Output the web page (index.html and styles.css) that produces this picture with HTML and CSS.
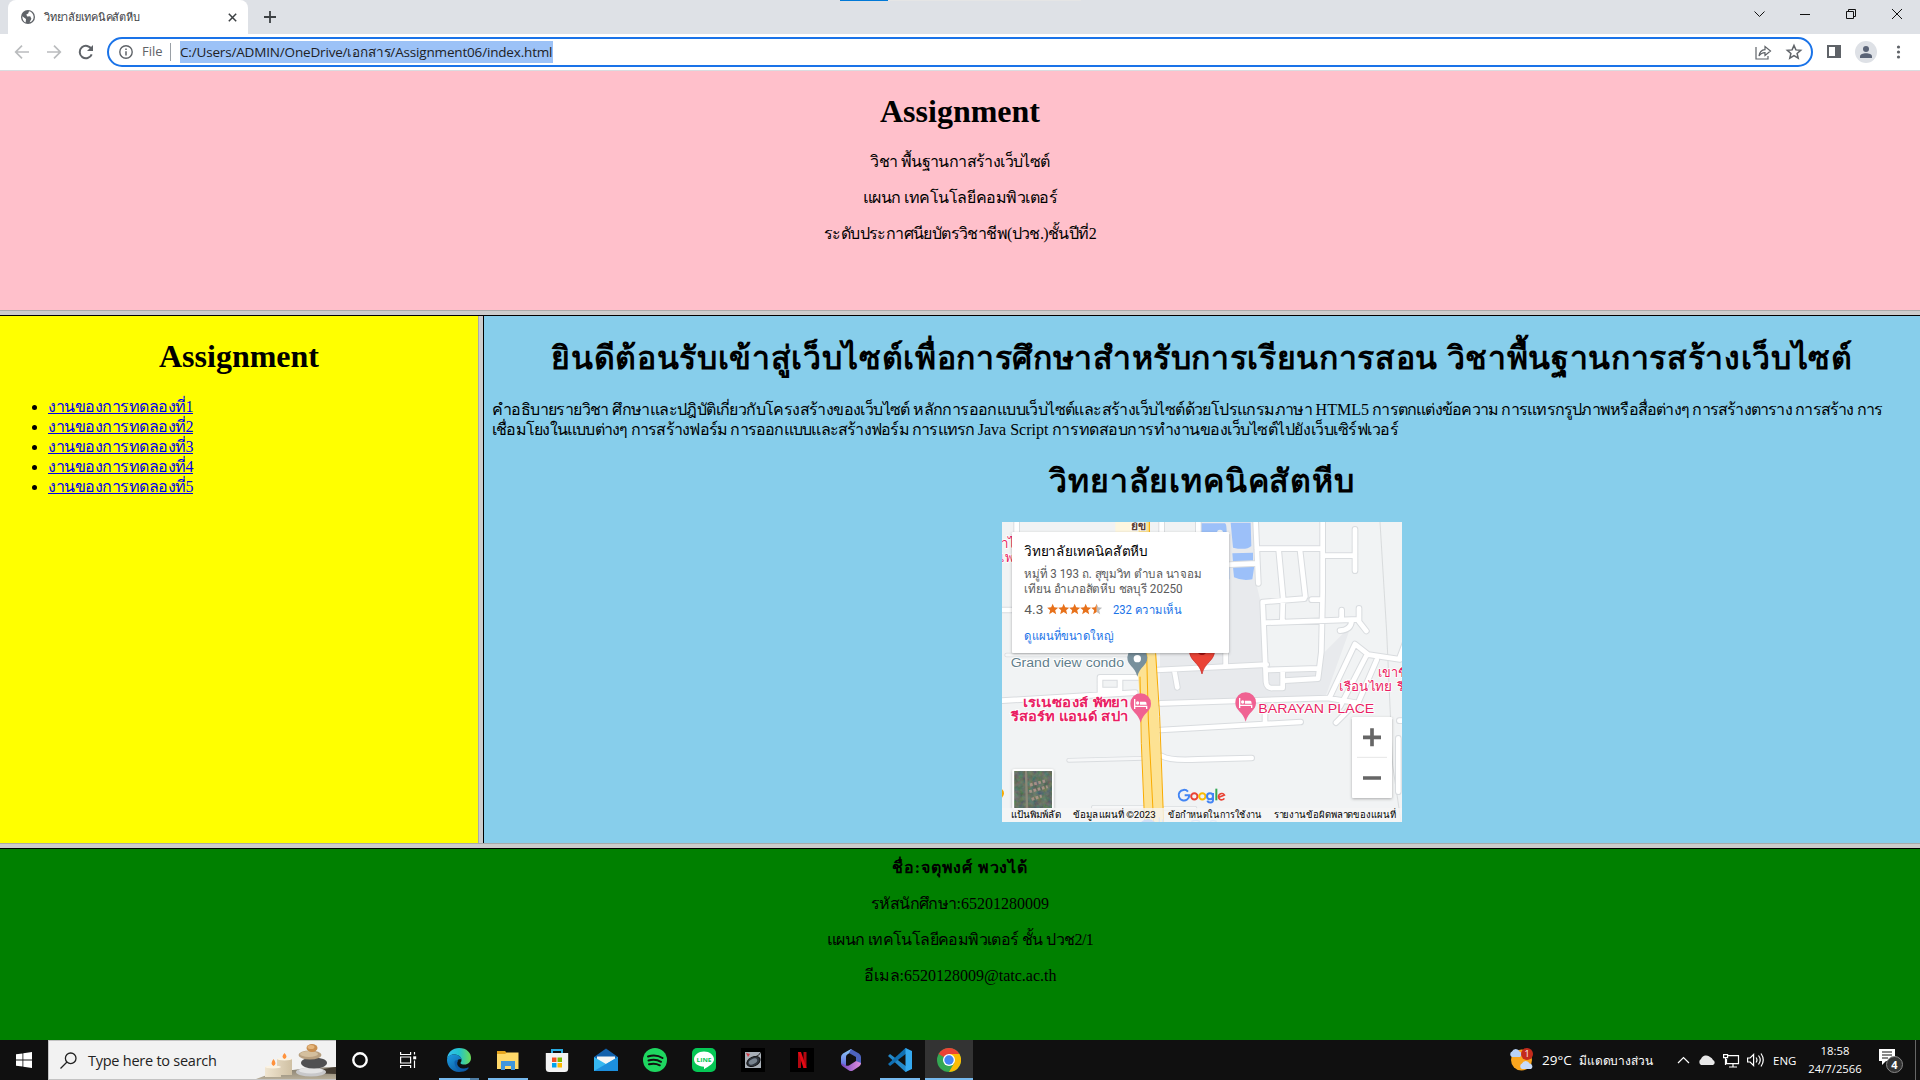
FILE: index.html
```
<!DOCTYPE html>
<html lang="th">
<head>
<meta charset="utf-8">
<title>วิทยาลัยเทคนิคสัตหีบ</title>
<link rel="stylesheet" href="styles.css">
</head>
<body>
<div class="screen">
  <header class="tabstrip">
    <div class="tab">
      <svg class="globe" width="14" height="14" viewBox="0 0 14 14"><circle cx="7" cy="7" r="7" fill="#5f6368"/><path d="M1.3 6.3 5 9l-.3 3.6C2.600 11.700 1.300 9.500 1.300 6.300M8 1.300 7.200 3.500 5.300 4.600l.9 2 3-.3 1.200 2.500-1.800 3.500c3-.8 4.300-3 4-6-.4-2.700-2.100-4.500-4.600-5" fill="#fff"/></svg>
      <span class="tab-title">วิทยาลัยเทคนิคสัตหีบ</span>
      <svg class="tab-close" width="9" height="9" viewBox="0 0 9 9"><path d="m.8.8 7.400 7.400m0-7.400L.8 8.200" stroke="#3c4043" stroke-width="1.500"/></svg>
    </div>
    <svg class="plus" width="12" height="12" viewBox="0 0 12 12"><path d="M6 0v12M0 6h12" stroke="#3c4043" stroke-width="1.800"/></svg>
    <i class="progress"></i>
    <svg class="winbtns" width="160" height="34" viewBox="0 0 160 34" fill="none" stroke="#111"><path d="m4.500 11.500 5 5 5-5"/><path d="M50 14.500h10"/><path d="M96.500 11.500h7v7h-7zM98.500 11V9.500h7v7H104"/><path d="m142 9 10 10m0-10-10 10"/></svg>
  </header>
  <div class="toolbar">
    <svg width="104" height="36" viewBox="0 0 104 36" fill="none" stroke-width="1.700"><g stroke="#babcbe"><path d="M29 18H16m6-6.300L15.700 18l6.300 6.300M47 18h13m-6-6.300 6.300 6.300-6.300 6.300"/></g><path d="M91.500 15.300a6.200 6.200 0 1 0 .2 5" stroke="#5f6368" stroke-width="2"/><path d="M93 11v6h-6z" fill="#5f6368"/></svg>
    <div class="omnibox">
      <svg class="info" width="14" height="14" viewBox="0 0 14 14"><circle cx="7" cy="7" r="6.200" fill="none" stroke="#5f6368" stroke-width="1.400"/><path d="M7 6.200v4.200M7 3.500V5" stroke="#5f6368" stroke-width="1.500"/></svg>
      <span class="scheme">File</span>
      <span class="url">C:/Users/ADMIN/OneDrive/เอกสาร/Assignment06/index.html</span>
      <svg class="omni-actions" width="50" height="18" viewBox="0 0 50 18" fill="none" stroke="#5f6368" stroke-width="1.200"><path d="M1 4v12h12v-3M4 13c.5-4 2.500-6 6-6.300V3.500L15.500 8 10 12.500V9.600c-2.500 0-4.500 1-6 3.400z"/><path d="m39 2.500 1.900 4.400 4.800.4-3.600 3.200 1.100 4.700L39 12.700l-4.200 2.500 1.100-4.700-3.600-3.200 4.800-.4z" stroke-width="1.500"/></svg>
    </div>
    <svg class="tool-actions" width="96" height="24" viewBox="0 0 96 24"><path d="M4 6h12v11H4z" fill="none" stroke="#5f6368" stroke-width="2"/><path d="M11 5h6v13h-6z" fill="#5f6368"/><circle cx="42" cy="12" r="11" fill="#dee1e6"/><circle cx="42" cy="9" r="3" fill="#5a6376"/><path d="M36 18v-1.500c0-4.200 12-4.200 12 0V18z" fill="#5a6376"/><g fill="#5f6368"><circle cx="74.500" cy="7" r="1.600"/><circle cx="74.500" cy="12" r="1.600"/><circle cx="74.500" cy="17" r="1.600"/></g></svg>
  </div>

  <main class="frames">
    <section class="frame top">
      <h1>Assignment</h1>
      <p class="tight">วิชา พื้นฐานกาสร้างเว็บไซต์</p>
      <p class="snug">แผนก เทคโนโลยีคอมพิวเตอร์</p>
      <p class="tight">ระดับประกาศนียบัตรวิชาชีพ(ปวช.)ชั้นปีที่2</p>
    </section>
    <div class="split-h"></div>
    <div class="middle">
      <nav class="frame menu">
        <h1>Assignment</h1>
        <ul>
          <li><a href="#1">งานของการทดลองที่1</a></li>
          <li><a href="#2">งานของการทดลองที่2</a></li>
          <li><a href="#3">งานของการทดลองที่3</a></li>
          <li><a href="#4">งานของการทดลองที่4</a></li>
          <li><a href="#5">งานของการทดลองที่5</a></li>
        </ul>
      </nav>
      <div class="split-v"></div>
      <section class="frame content">
        <h1 class="welcome">ยินดีต้อนรับเข้าสู่เว็บไซต์เพื่อการศึกษาสำหรับการเรียนการสอน วิชาพื้นฐานการสร้างเว็บไซต์</h1>
        <p class="desc"><span class="tight">คำอธิบายรายวิชา ศึกษาและปฎิบัติเกี่ยวกับโครงสร้างของเว็บไซต์ หลักการออกแบบเว็บไซต์และสร้างเว็บไซต์ด้วยโปรแกรมภาษา </span>HTML5<span class="tighter"> การตกแต่งข้อความ การแทรกรูปภาพหรือสื่อต่างๆ การสร้างตาราง การสร้าง การ</span><br><span class="tighter">เชื่อมโยงในแบบต่างๆ การสร้างฟอร์ม การออกแบบและสร้างฟอร์ม การแทรก </span>Java Script<span class="snug"> การทดสอบการทำงานของเว็บไซต์ไปยังเว็บเซิร์ฟเวอร์</span></p>
        <h1 class="college">วิทยาลัยเทคนิคสัตหีบ</h1>
        <div class="map">
          <svg width="400" height="300" viewBox="36 36 1200 900">
            <defs>
              <filter id="sh" x="-10%" y="-10%" width="120%" height="125%"><feDropShadow dx="0" dy="3" stdDeviation="4" flood-opacity=".3"/></filter>
              <filter id="aerial" x="0" y="0" width="1" height="1"><feTurbulence type="fractalNoise" baseFrequency=".07" numOctaves="3" seed="8"/><feColorMatrix values=".5 0 0 0 0  0 .5 0 0 .05  0 0 .4 0 .03  0 0 0 0 1"/></filter>
            </defs>
            <path fill="#f1f3f4" d="M36 36h1200v900H36z"/>
            <path fill="#e8eaed" d="M510 36h290v190l12 50 12 190 160 20 20-60 80-80-80 220-494 25z"/>
            <path fill="#f1f3f4" d="M520 36h100v30H520z"/>
            <path fill="#fef7e0" d="M376 36h95v30h-95z"/>
            <path fill="#9cc0f9" d="M630 40h75q5 0 5 30h-82zM722 38h60l2 70q-15 14-55 5zM727 130l62-2v25l-60 4zM729 172l64-4-6 40q-30 6-55-6zM700 170h18v38h-18z"/>
            <circle cx="690" cy="68" r="9" fill="#f1f3f4"/>
            <path d="M1170 36l20 330 18 400 25 170" fill="none" stroke="#ccced0" stroke-width="2"/>
            <g fill="none" stroke-linecap="round" stroke-linejoin="round">
              <g stroke="#d9dcdf" stroke-width="20">
                <path id="r" d="M80 36v40M515 36v40M625 36v40M797 36l8 184M720 164l80-4M800 116h195M998 36v210l-4 180-10 80-100 6M1005 137h90M1095 58v124M866 120l13 140-2 70M930 120l16 140M818 276l125-10M965 269h30M818 276l10 240q2 20 20 18h30v-55M830 480l155-5M1055 300v30M1107 295v40l22 28M830 338l275-10M1085 332q-2 28-35 30M36 300h28M500 480l330-16M707 430v34M553 482l9 50M36 572l400-24M330 550v-48h120M335 540h55v-30M512 580l500-16 86 14-60 60M512 660l420-24M825 590v44M515 738q25 15 110 10l160-4M1020 560l75-158 40 32 95 14M1230 440l30-80M1050 590l80-155M1095 600l65-150M1225 685v160M1236 632h-8"/>
              </g>
              <use href="#r" stroke="#fff" stroke-width="14"/>
              <path d="M236 751l225-6M50 435h370M310 892h150M515 895h100" stroke="#d9dcdf" stroke-width="14"/><path d="M236 751l225-6M50 435h370M310 892h150M515 895h100" stroke="#f6f7f8" stroke-width="9"/>
            </g>
            <path d="M440 430h58l8 190 16 320h-58l-12-330zM446 36h34v40h-34z" fill="#fde293"/>
            <path d="M478 36v40M450 500l4 200 10 240M470 430l5 200 16 310M497 430l12 190 12 320" fill="none" stroke="#f9ab00" stroke-width="3"/>
            <g class="poi">
              <text x="62" y="472" font-size="36" fill="#607d8b" textLength="340" lengthAdjust="spacingAndGlyphs">Grand view condo</text>
              <g fill="#e91e63">
                <text x="100" y="591" font-size="38" textLength="314" lengthAdjust="spacingAndGlyphs" class="b">เรเนซองส์ พัทยา</text>
                <text x="62" y="633" font-size="38" textLength="352" lengthAdjust="spacingAndGlyphs" class="b">รีสอร์ท แอนด์ สปา</text>
                <text x="805" y="608" font-size="37" textLength="348" lengthAdjust="spacingAndGlyphs">BARAYAN PLACE</text>
                <text x="1165" y="501" font-size="38">เขาชี</text>
                <text x="1048" y="542" font-size="38" textLength="156" lengthAdjust="spacingAndGlyphs">เรือนไทย</text>
                <text x="1222" y="542" font-size="38">รี</text>
                <text x="32" y="114" font-size="40">าไ</text><text x="30" y="157" font-size="40">เพ</text>
              </g>
              <text x="422" y="61" font-size="36" fill="#5d4037" class="b">ย์ข</text>
            </g>
            <path d="M508 922v14m10-8v8M604 934q14-6 26 0M660 934q8-4 20 0" stroke="#8db6f5" stroke-width="4" fill="none"/>
            <path d="M442 500c-8-32-30-32-30-58a30 30 0 0 1 60 0c0 26-22 26-30 58z" fill="#78909c"/><circle cx="442" cy="446" r="11" fill="#fff"/>
            <g id="hotel"><path d="M452 638c-8-32-31-32-31-57a31 31 0 0 1 62 0c0 25-23 25-31 57z" fill="#f06292"/><path d="M434 567v30M434 589h36v8" fill="none" stroke="#fff" stroke-width="4"/><path d="M450 575h16q4 0 4 9h-20z" fill="#fff"/><circle cx="443" cy="579" r="5" fill="#fff"/></g>
            <use href="#hotel" x="315" y="-3"/>
            <path d="M636 492c-8-36-38-38-38-72h76c0 34-30 36-38 72z" fill="#ea4335" stroke="#c5221f" stroke-width="2"/><circle cx="636" cy="421" r="14" fill="#a50e0e"/>
            <circle cx="26" cy="850" r="16" fill="#f9ab00"/><circle cx="474" cy="955" r="28" fill="#4285f4"/>
            <g filter="url(#sh)"><rect x="67" y="777" width="124" height="122" rx="6" fill="#fff"/></g>
            <path d="M73 783h113v111H73z" fill="#344b40"/><path d="M73 783h113v111H73z" filter="url(#aerial)" opacity=".55"/>
            <path d="M108 783l3 111" stroke="#8b8878" stroke-width="7"/><path d="M120 825l45-12M118 845l55-15M125 868l30-10" stroke="#b69a90" stroke-width="9" stroke-dasharray="8 5" opacity=".8"/>
            <path d="M36 894h1200v42H36z" fill="#f5f5f5" opacity=".8"/>
            <g filter="url(#sh)" fill="#fff"><rect x="66" y="66" width="651" height="363" rx="4"/><rect x="1086" y="621" width="120" height="243" rx="4"/></g>
            <path d="M1119 682h54M1146 655v54M1119 804h54" stroke="#666" stroke-width="11"/><path d="M1101 742h90" stroke="#e6e6e6" stroke-width="3"/>
            <g>
              <text x="103" y="137" font-size="42" fill="#000" textLength="370" lengthAdjust="spacingAndGlyphs">วิทยาลัยเทคนิคสัตหีบ</text>
              <g fill="#5b5b5b" font-size="36"><text x="103" y="204" textLength="531" lengthAdjust="spacingAndGlyphs">หมู่ที่ 3 193 ถ. สุขุมวิท ตำบล นาจอม</text><text x="103" y="249" textLength="475" lengthAdjust="spacingAndGlyphs">เทียน อำเภอสัตหีบ ชลบุรี 20250</text></g>
              <text x="103" y="312" font-size="41" fill="#5b5b5b" textLength="57" lengthAdjust="spacingAndGlyphs">4.3</text>
              <g fill="#1a73e8" font-size="36"><text x="369" y="312" textLength="205" lengthAdjust="spacingAndGlyphs">232 ความเห็น</text><text x="103" y="390" textLength="266" lengthAdjust="spacingAndGlyphs">ดูแผนที่ขนาดใหญ่</text></g>
              <g fill="#e7711b"><path id="star" d="m188 281 4.500 11 12 1-9 8 3 11.500-10.500-6.500-10.500 6.500 3-11.500-9-8 12-1z"/><use href="#star" x="33"/><use href="#star" x="66"/><use href="#star" x="99"/></g>
              <path d="m320 281 4.500 11 12 1-9 8 3 11.500-10.500-6.500z" fill="#bdbdbd"/><path d="m320 281v25l-10.500 6.500 3-11.500-9-8 12-1z" fill="#e7711b"/>
              <g font-size="29" fill="#000"><text x="62" y="923" textLength="150" lengthAdjust="spacingAndGlyphs">แป้นพิมพ์ลัด</text><text x="250" y="923" textLength="247" lengthAdjust="spacingAndGlyphs">ข้อมูลแผนที่ ©2023</text><text x="534" y="923" textLength="281" lengthAdjust="spacingAndGlyphs">ข้อกำหนดในการใช้งาน</text><text x="851" y="923" textLength="366" lengthAdjust="spacingAndGlyphs">รายงานข้อผิดพลาดของแผนที่</text></g>
            </g>
            <g fill="none" stroke-width="6"><path d="M594 845a16 16 0 1 0 4 11h-14" stroke="#4285f4"/><circle cx="613" cy="859" r="9.500" stroke="#ea4335"/><circle cx="637" cy="859" r="9.500" stroke="#fbbc04"/><path d="M669 849v21c0 10-14 10-17 2" stroke="#4285f4"/><circle cx="660" cy="859" r="9" stroke="#4285f4"/><path d="M679 836v35" stroke="#34a853"/><path d="m687 862 16-7a9.500 9.500 0 1 0 0 10" stroke="#ea4335" stroke-width="5"/></g>
          </svg>
        </div>
      </section>
    </div>
    <div class="split-h"></div>
    <footer class="frame bottom">
      <p class="name"><b>ชื่อ:จตุพงศ์ พวงได้</b></p>
      <p><span class="tight">รหัสนักศึกษา</span>:65201280009</p>
      <p class="tight">แผนก เทคโนโลยีคอมพิวเตอร์ ชั้น ปวช2/1</p>
      <p>อีเมล:6520128009@tatc.ac.th</p>
    </footer>
  </main>

  <div class="taskbar">
    <div class="start"><svg width="16" height="16" viewBox="0 0 16 16" fill="#fff"><path d="m0 2.300 6.500-.9v6.200H0zM7.300 1.300 16 0v7.600H7.300zM0 8.400h6.500v6.200L0 13.700zM7.300 8.400H16V16l-8.700-1.300z"/></svg></div>
    <div class="search">
      <svg width="17" height="17" viewBox="0 0 17 17" fill="none" stroke="#222" stroke-width="1.300"><circle cx="10.700" cy="6.300" r="5.300"/><path d="m7 10-6.500 6.500"/></svg>
      <span>Type here to search</span>
      <svg class="stones" width="80" height="38" viewBox="0 0 80 38">
        <defs><linearGradient id="gr" x2="0" y2="1"><stop stop-color="#81796a"/><stop offset="1" stop-color="#b7ad98"/></linearGradient><linearGradient id="wax" x2="1"><stop stop-color="#f0e5d0"/><stop offset="1" stop-color="#cfc0a3"/></linearGradient></defs>
        <path d="M0 38q25-11 80-12v12z" fill="url(#gr)"/><path d="M52 32q18-5 28-6v7z" fill="#443c32"/>
        <path d="M21 18h15v16H21zM9 26h16v10H9z" fill="url(#wax)"/><ellipse cx="28.500" cy="18" rx="7.500" ry="1.500" fill="#fbf3e3"/><ellipse cx="17" cy="26" rx="8" ry="1.500" fill="#fbf3e3"/>
        <path d="M28.500 12q4 4 0 6-4-2 0-6M17.500 18q4 5 0 7-4-2 0-7" fill="#ff923c"/>
        <ellipse cx="55" cy="31" rx="15" ry="4.500" fill="#c8c8ca"/><ellipse cx="55" cy="29.500" rx="12" ry="3" fill="#e3e3e4"/><ellipse cx="58" cy="22" rx="13" ry="5.500" fill="#505052"/><ellipse cx="54" cy="14" rx="11.500" ry="4.500" fill="#b8a080"/><ellipse cx="53" cy="13" rx="9" ry="3" fill="#d4bf9e"/><ellipse cx="56" cy="7" rx="5.500" ry="4" fill="#c98f50"/><ellipse cx="55" cy="6" rx="3.500" ry="2" fill="#e5b67c"/>
      </svg>
    </div>
    <div class="cell"><svg width="16" height="16" viewBox="0 0 16 16"><circle cx="8" cy="8" r="6.700" fill="none" stroke="#fff" stroke-width="2.400"/></svg></div>
    <div class="cell"><svg width="17" height="16" viewBox="0 0 17 16" fill="none" stroke="#fff" stroke-width="1.200"><path d="M.6 0v2.500h10V0M.6 16v-2.500h10V16M.6 5h10v6H.6zM14.500 0v2.500M14.500 8.500V16"/><path d="M13.200 4.300h3v3h-3z" fill="#fff" stroke="none"/></svg></div>
    <div class="apps">
      <div class="app run edge"><svg width="24" height="24" viewBox="0 0 24 24"><defs><linearGradient id="e1" x2="1"><stop stop-color="#35c1f1"/><stop offset=".5" stop-color="#22c3cf"/><stop offset="1" stop-color="#6bdc55"/></linearGradient><linearGradient id="e2" x2="1" y2="1"><stop stop-color="#1b9de2"/><stop offset="1" stop-color="#0b4a92"/></linearGradient></defs><path d="M0 12C0 4 6 0 12 0c8 0 12 5 12 10 0 4-3 6.500-6.500 6.500-2 0-4-.7-4-1.600 0-.6 1-1 1-3C14.500 8 10 6.500 7 6.500 3 6.500 0 9 0 12z" fill="url(#e1)"/><path d="M0 12C0 8.500 3.500 6.500 7 6.500c4 0 7.500 2.300 7.500 5 0 0-3-1-4.500 1.500-2 4 2 8 6.500 8 3 0 4.500-1.500 5-1.500.5 0 0 1-1 2-2 1.800-5 2.500-8.500 2.500C5 24 0 18 0 12z" fill="url(#e2)"/><path d="M7.500 14c0 6 5 10 9 8.500 2-.7 4.500-2.500 5.200-3.500-4 2.500-8.700 2-10.700-1-1.200-2-1-4 .3-5.500-2-.5-3.800 0-3.800 1.500z" fill="#0c5fae"/></svg></div>
      <div class="app run"><svg width="22" height="19" viewBox="0 0 22 19"><path d="M0 0h8l2 2h11v4H0z" fill="#e6a51e"/><path d="M0 3h8l2-1.500h11.500V18H0z" fill="#ffd869"/><path d="M4 19v-9h14v9h-4v-4H8v4z" fill="#3f95dc"/></svg></div>
      <div class="app"><svg width="24" height="24" viewBox="0 0 24 24"><path d="M7 6V2h10v4" fill="none" stroke="#29abe2" stroke-width="2"/><path d="M.8 5h22.400v15.500a3.500 3.500 0 0 1-3.500 3.500H4.300a3.500 3.500 0 0 1-3.500-3.500z" fill="#f3f3f3"/><path d="M7 9.500h4.500V14H7z" fill="#f25022"/><path d="M12.500 9.500H17V14h-4.500z" fill="#7fba00"/><path d="M7 15h4.500v4.500H7z" fill="#00a4ef"/><path d="M12.500 15H17v4.500h-4.500z" fill="#ffb900"/></svg></div>
      <div class="app"><svg width="24" height="24" viewBox="0 0 24 24"><path d="m0 9 12-8.500L24 9v3H0z" fill="#1160ac"/><path d="M3 8.500h18V18H3z" fill="#f5f5f5"/><path d="M0 9l12 7 12-7v14H0z" fill="#36b8f1"/><path d="M0 23 12 16l12-7v14z" fill="#1c8fdd"/></svg></div>
      <div class="app"><svg width="24" height="24" viewBox="0 0 24 24"><circle cx="12" cy="12" r="12" fill="#1ed760"/><path d="M5 8.500q8-2.500 14.500 1.500M5.500 12.500q7-2 12.500 1.300M6 16.300q6-1.600 10.800 1" fill="none" stroke="#111" stroke-width="2" stroke-linecap="round"/></svg></div>
      <div class="app"><svg width="24" height="24" viewBox="0 0 24 24"><rect width="24" height="24" rx="5" fill="#06c755"/><path d="M12 3.500c5.500 0 10 3.500 10 7.800 0 4-5 7-10 10v-2.500C6 18.500 2 15.500 2 11.300c0-4.300 4.500-7.800 10-7.800z" fill="#fff"/><text x="4.500" y="13.500" font-size="6" font-weight="bold" fill="#06c755" textLength="15" lengthAdjust="spacingAndGlyphs">LINE</text></svg></div>
      <div class="app"><svg width="24" height="24" viewBox="0 0 24 24"><path d="M0 0h24v24H0z" fill="#000"/><path d="M4 4h16v16H4z" fill="#a9b0b8"/><ellipse cx="12.500" cy="13.500" rx="7" ry="4.500" transform="rotate(-25 12.500 13.500)" fill="#303740" stroke="#111"/><ellipse cx="12" cy="13.500" rx="4.500" ry="2.500" transform="rotate(-25 12 13.500)" fill="#78838e"/><path d="m5 5 4 1-2 3z" fill="#d13a43"/><path d="M14 9q4-1 6-5" stroke="#222" fill="none"/></svg></div>
      <div class="app"><svg width="24" height="24" viewBox="0 0 24 24"><path d="M0 0h24v24H0z" fill="#000"/><path d="M8 4h3v16H8zM13.500 4h3v16h-3z" fill="#b20710"/><path d="M8 4h3l5.500 16h-3z" fill="#e50914"/></svg></div>
      <div class="app"><svg width="24" height="24" viewBox="0 0 24 24"><defs><linearGradient id="m1" x2="0" y2="1"><stop stop-color="#8fcdf8"/><stop offset="1" stop-color="#6168dd"/></linearGradient><linearGradient id="m2" x2="1"><stop stop-color="#7045bd"/><stop offset="1" stop-color="#e291e0"/></linearGradient></defs><path d="M12 1 4 5.500Q2 7 2 9v7l5 2V9q0-2 2-3l5-3z" fill="url(#m1)"/><path d="M12 1l8 4.500Q22 7 22 9v7l-5-2.500V9L10 5z" fill="#4d63bf"/><path d="M2 15q0 2 2 3.500l6 4q2 1 4 0l6-4q2-1.500 2-3.500l-5-2-7 4.500q-3 1-5-1z" fill="url(#m2)"/></svg></div>
      <div class="app run"><svg width="24" height="24" viewBox="0 0 24 24"><path d="m0 8 2-2 17 13v4L17.500 24z" fill="#2489ca"/><path d="m0 16 2 2L19 5V1l-1.500-1z" fill="#1070b3"/><path d="M17.500 0 24 3v18l-6.500 3z" fill="#35a9ef"/></svg></div>
      <div class="app run active"><svg width="24" height="24" viewBox="0 0 24 24"><circle cx="12" cy="12" r="12" fill="#34a853"/><path d="M12 12 1.600 6a12 12 0 0 1 20.800 0H12z" fill="#ea4335"/><path d="M12 6h10.400A12 12 0 0 1 12 24l5.200-9z" fill="#fbbc04"/><circle cx="12" cy="12" r="6" fill="#fff"/><circle cx="12" cy="12" r="4.700" fill="#4285f4"/></svg></div>
    </div>
    <div class="weather"><svg width="25" height="24" viewBox="0 0 25 24"><circle cx="12.500" cy="12" r="10.500" fill="#f9a51e"/><path d="M3 9a3 3 0 0 1 0-5.500 4 4 0 0 1 7.500 0A3 3 0 0 1 11 9z" fill="#b8d2f7"/><path d="M13 21a3 3 0 0 1 0-5.500 4 4 0 0 1 7.500 0 3 3 0 0 1 1.500 5.500z" fill="#c8dcfa"/><circle cx="18" cy="6" r="6" fill="#c42b1c"/><text x="15.600" y="9.300" font-size="9" fill="#fff">1</text></svg><span class="temp">29°C</span><span class="cond">มีแดดบางส่วน</span></div>
    <svg class="tray" width="90" height="20" viewBox="0 0 90 20" fill="none" stroke="#fff" stroke-width="1.200"><path d="m2 13 5.500-5.500L13 13"/><path d="M25 15a3.500 3.500 0 0 1 0-6 5.500 5.500 0 0 1 9-2 5 5 0 0 1 3 3 2.700 2.700 0 0 1 0 5z" fill="#e8e8e8" stroke="none"/><path d="M52 5.600h10.500v8H50.500V9M57 14v3m-4 0h8M47.600 4.600h4v3h-4zM49.500 8v7"/><path d="M71.600 8h2.500l3.500-3.500v11L74.100 12h-2.500zM80 7.500q2 2.500 0 5M82.500 5.500q3.500 4.500 0 9M85 3.500q4.500 6.500 0 13"/></svg>
    <span class="lang">ENG</span>
    <div class="clock"><span>18:58</span><span>24/7/2566</span></div>
    <div class="notes"><svg width="26" height="26" viewBox="0 0 26 26"><path d="M1 2h16v12H8l-4 4v-4H1z" fill="#fff"/><path d="M4 5h10M4 8h10M4 11h6" stroke="#111"/><circle cx="16.500" cy="17.500" r="8" fill="#333" stroke="#888"/><text x="13.200" y="21.500" font-size="11" font-weight="bold" fill="#fff">4</text></svg></div>
  </div>
</div>
</body>
</html>
```
FILE: styles.css
```
* { box-sizing: border-box; }
html, body { margin: 0; overflow: hidden; }
.screen { width: 1920px; height: 1080px; display: flex; flex-direction: column; font-family: "Open Sans", "Noto Sans", sans-serif; }
svg { display: block; flex: none; }
.tabstrip { height: 34px; background: #dee1e6; display: flex; align-items: center; position: relative; padding-left: 8px; }
.tab { width: 240px; height: 34px; background: #fff; border-radius: 8px 8px 0 0; display: flex; align-items: center; padding: 0 11px 0 13px; }
.tab-title { margin-left: 9px; flex: 1; font-size: 11px; letter-spacing: -.25px; color: #3c4043; white-space: nowrap; }
.plus { margin-left: 16px; }
.progress { position: absolute; left: 840px; top: 0; width: 241px; height: 1px; background: linear-gradient(90deg, #0078d7 48px, #e5e5e5 48px); }
.winbtns { margin-left: auto; margin-right: 10px; }
.toolbar { height: 37px; background: #fff; border-bottom: 1px solid #dadce0; display: flex; align-items: center; }
.omnibox { margin-left: 3px; width: 1706px; height: 30px; border: 2px solid #1a73e8; border-radius: 15px; display: flex; align-items: center; padding-left: 10px; font-size: 13.5px; line-height: 22px; color: #202124; }
.scheme { margin-left: 9px; width: 29px; height: 18px; line-height: 17px; color: #5f6368; border-right: 1px solid #9aa0a6; font-size: 13px; }
.url { margin-left: 9px; background: #9cc2f7; height: 22px; white-space: nowrap; width: 373px; letter-spacing: -.17px; }
.omni-actions { margin-left: auto; margin-right: 6px; }
.tool-actions { margin-left: 11px; }
.frames { height: 969px; font-family: "Liberation Serif", serif; font-size: 16px; line-height: 20px; color: #000; }
.frame { text-align: center; white-space: nowrap; overflow: hidden; padding: 0 8px; }
.frame h1 { font-size: 32px; line-height: 37px; margin: 0; }
.frame p { margin: 0 0 16px; height: 20px; }
.tight { letter-spacing: -.6px; }
.tighter { letter-spacing: -.78px; }
.snug { letter-spacing: -.48px; }
.top { background: #ffc0cb; height: 239px; padding-top: 22px; }
.top h1 { margin-bottom: 22px; }
.split-h { height: 6px; background: #ccc; border-top: 1px solid #aaa; border-bottom: 1px solid #000; }
.split-v { width: 6px; background: #ccc; border-left: 1px solid #aaa; border-right: 1px solid #000; }
.middle { height: 527px; display: flex; }
.menu { width: 478px; background: #ff0; padding-top: 22px; }
.menu h1 { margin-bottom: 22px; }
.menu ul { margin: 0; padding: 0 0 0 40px; text-align: left; }
.menu li { height: 20px; }
.menu a { color: #00e; letter-spacing: -.5px; }
.content { flex: 1; background: #87ceeb; padding-top: 24px; }
.content h1 { height: 37px; }
.content .welcome { letter-spacing: .66px; }
.content .college { letter-spacing: .85px; }
.content .desc { text-align: left; height: 40px; margin: 23px 0; }
.map { width: 400px; height: 300px; margin: 22px auto 0; }
.map text { font-family: Roboto, "Noto Sans", sans-serif; }
.map .poi text { font-family: "Liberation Sans", sans-serif; paint-order: stroke; stroke: #fff; stroke-width: 5px; }
.map .b { font-weight: bold; }
.bottom { background: #008000; height: 191px; padding-top: 9px; }
.name { letter-spacing: .8px; }
.taskbar { height: 40px; background: #101010; display: flex; color: #fff; align-items: center; font-size: 12px; }
.start { width: 48px; height: 40px; display: grid; place-items: center; }
.search { width: 288px; height: 40px; background: #f2f2f2; border: 1px solid #c3c3c3; border-right: 0; color: #222; display: flex; align-items: center; padding-left: 11px; font-size: 14.5px; letter-spacing: -.25px; }
.search span { margin-left: 11px; white-space: nowrap; }
.stones { margin-left: auto; }
.cell { width: 48px; display: grid; place-items: center; }
.apps { display: flex; gap: 1px; margin-left: 3px; }
.app { width: 48px; height: 40px; display: grid; place-items: center; position: relative; }
.run::after { content: ""; position: absolute; left: 4px; right: 4px; bottom: 0; height: 2px; background: #76b9ed; }
.edge::after { background: linear-gradient(90deg, #76b9ed 31px, #4f7ea5 31px); }
.active { background: #333; }
.active::after { left: 0; right: 0; }
.weather { display: flex; align-items: center; margin-left: 536px; font-size: 13.5px; white-space: nowrap; }
.temp { margin-left: 8px; width: 37px; }
.cond { font-size: 12px; width: 74px; letter-spacing: -.15px; }
.tray { margin-left: 23px; }
.lang { margin-left: 7px; width: 24px; font-size: 11.5px; }
.clock { display: flex; flex-direction: column; text-align: center; line-height: 18px; width: 54px; margin-left: 11px; font-size: 11.3px; }
.notes { margin-left: 16px; padding-right: 11px; border-right: 1px solid #666; height: 40px; display: grid; place-items: center; }
```
